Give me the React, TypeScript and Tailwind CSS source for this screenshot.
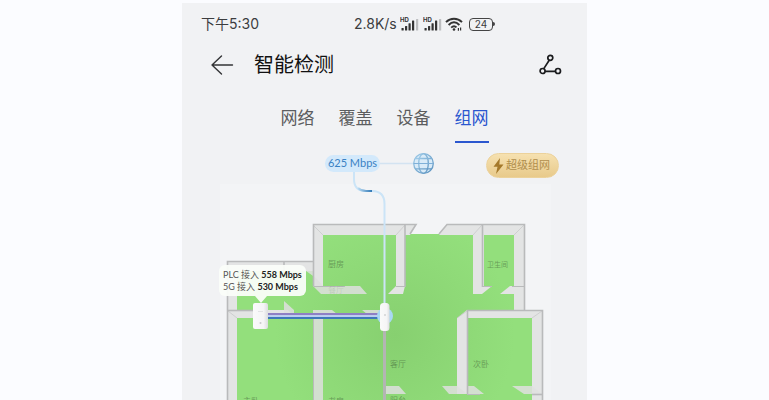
import { useState } from "react";

const TABS = ["网络", "覆盖", "设备", "组网"];

const WALL = "#dfe0df";
const EDGE = "#b9babb";

function Signal() {
  return (
    <svg width="20" height="16" viewBox="0 0 20 16" aria-hidden="true">
      <text x="0" y="5.5" fontSize="6" fontWeight="700" fill="#333" fontFamily="Inter, sans-serif">
        HD
      </text>
      <g fill="#333">
        <rect x="1.5" y="12" width="2.2" height="2.4" rx="0.5" />
        <rect x="5" y="10" width="2.2" height="4.4" rx="0.5" />
        <rect x="8.5" y="7.2" width="2.2" height="7.2" rx="0.5" />
        <rect x="12" y="4.6" width="2.2" height="9.8" rx="0.5" />
      </g>
      <rect x="16" y="3" width="2.2" height="11.4" rx="0.5" fill="#bcbdbf" />
    </svg>
  );
}

function Wifi() {
  return (
    <svg width="18" height="14" viewBox="0 0 18 14" fill="none" stroke="#333" strokeWidth="1.9" aria-hidden="true">
      <path d="M1 5.2C5.5 0.6 12.500 0.600 17 5.200" />
      <path d="M3.600 8C7 4.600 11 4.600 14.400 8" />
      <path d="M6.200 10.600C8 8.900 10 8.900 11.500 10.400" />
      <circle cx="9" cy="12.500" r="1.300" fill="#333" stroke="none" />
      <path d="M13.400 11v2.800M15.600 10.600v2.800" strokeWidth="1.200" />
    </svg>
  );
}

function StatusBar() {
  return (
    <div className="flex h-[42px] items-center pl-[19px] text-sm text-[#3c3d3f]">
      <span className="w-[153px]">下午5:30</span>
      <span className="w-11 whitespace-nowrap">2.8K/s</span>
      <div className="flex items-center">
        <span className="flex w-[23px] pl-0.5"><Signal /></span>
        <span className="flex w-6 pl-0.5"><Signal /></span>
        <span className="flex w-6"><Wifi /></span>
        <span className="flex h-[13px] w-6 items-center justify-center rounded-[4px] border border-[#444] text-[10px]">
          24
        </span>
        <span className="h-1 w-0.5 rounded-r bg-[#444]" />
      </div>
    </div>
  );
}

function TitleBar() {
  return (
    <header className="flex h-[38px] items-center justify-between pt-0.5 pr-[25px] pl-7">
      <div className="flex items-center gap-5">
        <button type="button" aria-label="返回">
          <svg width="24" height="20" viewBox="0 0 24 20" fill="none" stroke="#333436" strokeWidth="1.4" strokeLinecap="round" strokeLinejoin="round">
            <path d="M22.500 10H2M11.500 1L2 10l9.500 9" />
          </svg>
        </button>
        <h1 className="text-xl text-[#111]">智能检测</h1>
      </div>
      <button type="button" aria-label="拓扑">
        <svg width="24" height="22" viewBox="0 0 24 22" fill="none" stroke="#1b1c1e" strokeWidth="1.700">
          <circle cx="12.300" cy="3.800" r="2.500" />
          <circle cx="4.600" cy="17" r="2.500" />
          <circle cx="20" cy="17" r="2.500" />
          <path d="M11.200 6.200L5.800 14.600M7.100 17.400H17.500" />
        </svg>
      </button>
    </header>
  );
}

function FloorPlan() {
  return (
    <svg viewBox="182 143 405 257" className="block h-auto w-full" role="img" aria-label="户型图">
      <defs>
        <radialGradient id="floor" gradientUnits="userSpaceOnUse" cx="395" cy="335" r="120">
          <stop offset="0" stopColor="#87d070" />
          <stop offset="1" stopColor="#93df7c" />
        </radialGradient>
        <linearGradient id="device" x1="0" x2="1">
          <stop offset="0" stopColor="#fafafa" />
          <stop offset="0.7" stopColor="#f5f5f6" />
          <stop offset="1" stopColor="#dcdddf" />
        </linearGradient>
        <linearGradient id="globe" x1="0" y1="0" x2="1" y2="1">
          <stop offset="0" stopColor="#9fcbe8" />
          <stop offset="1" stopColor="#5c93c0" />
        </linearGradient>
        <linearGradient id="flow" x1="0" x2="1">
          <stop offset="0" stopColor="#b9daf2" />
          <stop offset="1" stopColor="#2f77b5" />
        </linearGradient>
      </defs>

      <rect x="220" y="184" width="331" height="230" fill="#f3f4f6" />

      {/* floor */}
      <path d="M228 262H313V225H405V234H482V225H524V311H542V410H228Z" fill="url(#floor)" />

      {/* walls */}
      <g fill="#e3e4e4">
        <path d="M313 224H405V286L403 294H388L396 286V235H323V286H313Z" />
        <path d="M405 224H416L410 235H405Z" />
        <path d="M447 224H525V311H514V294H500L510 286H514V235H484V286H492L482 294H473V235H439Z" />
        <path d="M227 261H313V271H237V310H227Z" />
        <path d="M227 310H288L295 318H237V410H227Z" />
        <path d="M467 310H543V410H532V318H467V394H457V318Z" />
      </g>
      <g fill={WALL} opacity="0.85">
        <path d="M306 271H313V286H323L316 278Z" />
        <path d="M313 286H360L367 294H321Z" />
        <path d="M284 301L294 310V318H284Z" />
        <path d="M313 310H332L342 318H323V410H313Z" />
        <path d="M362 310H384V318H372Z" />
        <path d="M442 386H457L467 394H449Z" />
        <path d="M467 386H474L484 394H467Z" />
        <path d="M512 386H532L542 394H524Z" />
        <path d="M384 386H399L406 394H384Z" />
      </g>

      {/* wall edges */}
      <g fill="none" stroke={EDGE} strokeWidth="1.600">
        <path d="M313.500 286V224.500H416L410 234" />
        <path d="M405 224.500V287" />
        <path d="M439 234L447 224.500H524.500V311" />
        <path d="M482.500 224.500V287" />
        <path d="M313 261.500H227.500V400" />
        <path d="M227 310.500H256" />
        <path d="M284 261.500V271" />
        <path d="M467.500 394V310.500H542.500V400" />
        <path d="M532 394.500H542" />
      </g>
      <g fill="none" stroke={EDGE} strokeWidth="1">
        <path d="M313.500 286.500H345M396 286.500H405M483 286.500H492M512 286.500H525M467 394.500H480M313.500 318V400" />
        <path d="M313 225L323 235M405 225L396 235M482 225L473 235M524 225L514 235M228 311L237 318M542 311L532 318M467 311L457 318" opacity="0.500" />
      </g>
      <path d="M384.500 330V400" stroke="#b3b5b3" strokeWidth="3" />

      {/* room names */}
      <g fill="#3c5a34" fillOpacity="0.500" fontSize="8" fontFamily="Inter, 'Noto Sans CJK SC', sans-serif">
        <text x="328" y="267">厨房</text>
        <text x="328" y="293" fillOpacity="0.150">餐厅</text>
        <text x="487" y="267" fontSize="7">卫生间</text>
        <text x="390" y="367">客厅</text>
        <text x="473" y="367">次卧</text>
        <text x="243" y="404">主卧</text>
        <text x="328" y="404">书房</text>
        <text x="390" y="403">阳台</text>
      </g>

      {/* uplink */}
      <path d="M380 163.500H413" stroke="#d3e3f1" strokeWidth="1.500" />
      <g fill="none" stroke="url(#globe)" strokeWidth="1.300">
        <circle cx="423.500" cy="163.500" r="9.800" fill="#d9ebf8" />
        <ellipse cx="423.500" cy="163.500" rx="4.800" ry="9.800" />
        <path d="M415.500 158.500H431.500M415.500 168.800H431.500" />
      </g>
      <path d="M413.700 163.500H433.300" stroke="#7fb0d8" strokeWidth="1" />
      <path d="M354 171V179Q354 191 366 191H372Q384.500 191 384.500 204V304" fill="none" stroke="#cbe4f7" strokeWidth="2" />
      <path d="M358 188Q361 191 366 191H372" fill="none" stroke="url(#flow)" strokeWidth="2" />

      {/* PLC and 5G links */}
      <rect x="268" y="313" width="112" height="2" fill="#8e7fc4" />
      <rect x="268" y="315" width="112" height="2" fill="#bccff0" />
      <rect x="268" y="317" width="112" height="2" fill="#3f78ba" />

      {/* devices */}
      <circle cx="385" cy="316" r="8" fill="#a9d8f5" />
      <rect x="380" y="303" width="9.500" height="28" rx="3.500" fill="url(#device)" />
      <circle cx="385" cy="315" r="0.800" fill="#b9bbbd" />
      <rect x="253" y="303" width="15" height="26" rx="2" fill="url(#device)" />
      <path d="M258 311.500H263" stroke="#e2e3e5" strokeWidth="1" />
      <circle cx="260.500" cy="323" r="1" fill="#c9cacc" />
    </svg>
  );
}

function NetworkMap() {
  return (
    <section className="relative">
      <FloorPlan />
      <span className="absolute top-3 left-[143px] flex h-[17px] w-[55px] items-center justify-center rounded-full bg-[#d3e9fb] font-[Lato] text-[11px] whitespace-nowrap text-[#3a82c4]">
        625 Mbps
      </span>
      <button
        type="button"
        className="absolute top-2.5 right-7 flex h-[25px] w-[73px] items-center gap-0.5 rounded-full border border-[#ecd29b] bg-linear-to-b from-[#f6e1b0] to-[#e8ca8b] pl-1.5 text-[11px] whitespace-nowrap text-[#b08e4c]"
      >
        <svg width="11" height="16" viewBox="0 0 11 16" fill="#a5792a" aria-hidden="true">
          <path d="M7 0L0.500 8.800H4.500L3 16L10.500 6.500H6.300Z" />
        </svg>
        超级组网
      </button>
      <div className="absolute top-[122px] left-[37px] h-[31px] w-[87px] rounded-md bg-[#fafdf9]/95 py-1 pl-1 font-[Lato,'Noto_Sans_CJK_SC',sans-serif] text-[9px] leading-3 whitespace-nowrap text-[#555]">
        <p>PLC 接入 <b className="text-[#222]">558 Mbps</b></p>
        <p>5G 接入 <b className="text-[#222]">530 Mbps</b></p>
        <svg className="absolute top-full left-9" width="12" height="7" viewBox="0 0 12 7" fill="#f5fcf2" aria-hidden="true">
          <path d="M0 0H12L6 7Z" />
        </svg>
      </div>
    </section>
  );
}

export default function App() {
  const [active, setActive] = useState("组网");
  return (
    <div className="min-h-screen bg-[#fbfcff] pt-[3px] font-[Inter,'Noto_Sans_CJK_SC',sans-serif]">
      <main className="mx-auto w-full max-w-[405px] bg-[#f1f2f4]">
        <StatusBar />
        <TitleBar />
        <nav role="tablist" className="flex justify-center gap-6">
          {TABS.map((tab) => (
            <button
              key={tab}
              type="button"
              role="tab"
              aria-selected={tab === active}
              onClick={() => setActive(tab)}
              className={`border-b-2 pt-[23px] pb-[11px] text-[17px] leading-6 ${
                tab === active ? "border-[#2b57cf] text-[#2b57cf]" : "border-transparent text-[#5c5d5f]"
              }`}
            >
              {tab}
            </button>
          ))}
        </nav>
        <NetworkMap />
      </main>
    </div>
  );
}
